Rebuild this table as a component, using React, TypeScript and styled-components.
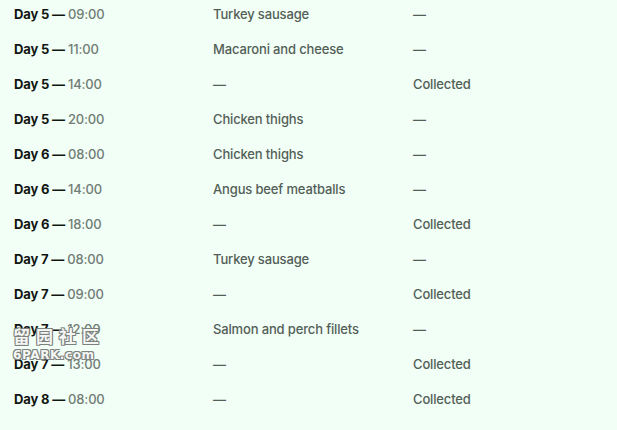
import styled, { createGlobalStyle } from 'styled-components';

const GlobalStyle = createGlobalStyle`
  html, body {
    margin: 0;
    padding: 0;
    background: #f1fff6;
  }
  body {
    font-family: Inter, "Noto Sans", Arial, sans-serif;
    -webkit-font-smoothing: antialiased;
  }
`;

const Page = styled.div`
  position: relative;
  width: 617px;
  height: 430px;
  overflow: hidden;
  background: #f1fff6;
  padding: 6px 0 0 14px;
  box-sizing: border-box;
`;

const Table = styled.div`
  display: flex;
  flex-direction: column;
`;

const Row = styled.div`
  display: grid;
  grid-template-columns: 199px 200px 1fr;
  height: 35px;
  font-size: 13px;
  line-height: 16px;
`;

const When = styled.div`
  font-weight: 700;
  color: #111512;
  letter-spacing: -0.15px;
`;

const Time = styled.span`
  font-weight: 500;
  color: #717c75;
`;

const Cell = styled.div`
  font-weight: 500;
  color: #545e58;
  letter-spacing: -0.15px;
`;

// image-host watermark laid over the lower-left rows
const Watermark = styled.div`
  position: absolute;
  left: 13px;
  top: 326px;
  display: flex;
  flex-direction: column;
  align-items: flex-start;
  gap: 3px;
  color: #f4f6f4;
  font-family: "Noto Sans CJK SC", sans-serif;
  text-shadow: -1px -1px 0 #7d817e, 1px -1px 0 #7d817e, -1px 1px 0 #7d817e,
    1px 1px 0 #7d817e;
  pointer-events: none;
`;

const WatermarkHan = styled.div`
  font-size: 17px;
  line-height: 20px;
  letter-spacing: 6px;
  font-weight: 700;
`;

const WatermarkSite = styled.div`
  font-family: "DejaVu Sans", sans-serif;
  font-size: 12px;
  line-height: 13px;
  font-weight: 700;
  letter-spacing: 0.6px;
`;

const rows: [string, string, string, string][] = [
  ['Day 5', '09:00', 'Turkey sausage', '—'],
  ['Day 5', '11:00', 'Macaroni and cheese', '—'],
  ['Day 5', '14:00', '—', 'Collected'],
  ['Day 5', '20:00', 'Chicken thighs', '—'],
  ['Day 6', '08:00', 'Chicken thighs', '—'],
  ['Day 6', '14:00', 'Angus beef meatballs', '—'],
  ['Day 6', '18:00', '—', 'Collected'],
  ['Day 7', '08:00', 'Turkey sausage', '—'],
  ['Day 7', '09:00', '—', 'Collected'],
  ['Day 7', '12:00', 'Salmon and perch fillets', '—'],
  ['Day 7', '13:00', '—', 'Collected'],
  ['Day 8', '08:00', '—', 'Collected'],
];

export default function App() {
  return (
    <>
      <GlobalStyle />
      <Page>
        <Table>
          {rows.map(([day, time, food, status], i) => (
            <Row key={i}>
              <When>
                {day} — <Time>{time}</Time>
              </When>
              <Cell>{food}</Cell>
              <Cell>{status}</Cell>
            </Row>
          ))}
        </Table>
        <Watermark>
          <WatermarkHan>留园社区</WatermarkHan>
          <WatermarkSite>6PARK.com</WatermarkSite>
        </Watermark>
      </Page>
    </>
  );
}
